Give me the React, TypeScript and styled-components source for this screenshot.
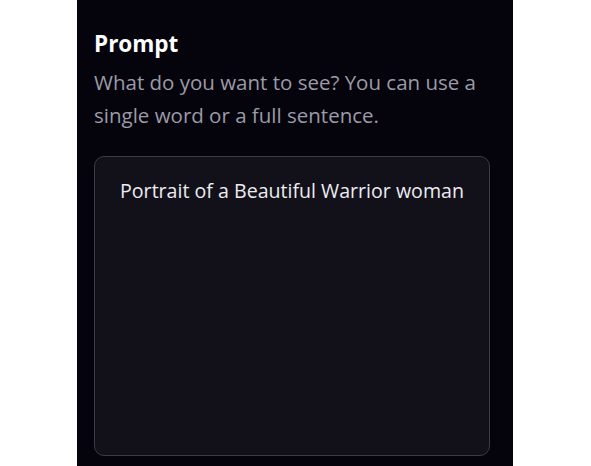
import styled, { createGlobalStyle } from "styled-components";

const GlobalStyle = createGlobalStyle`
  html, body {
    margin: 0;
    padding: 0;
    background: #ffffff;
  }
  * {
    box-sizing: border-box;
  }
`;

export default function App() {
  return (
    <>
      <GlobalStyle />
      <Page>
        <Panel>
          <Title>Prompt</Title>
          <Description>
            What do you want to see? You can use a single word or a full
            sentence.
          </Description>
          <PromptInput
            defaultValue="Portrait of a Beautiful Warrior woman"
            spellCheck={false}
          />
        </Panel>
      </Page>
    </>
  );
}

const Page = styled.div`
  width: 591px;
  height: 466px;
  display: flex;
  overflow: hidden;
  padding-left: 77px;
`;

const Panel = styled.div`
  width: 436px;
  height: 466px;
  background-color: #05040d;
  padding: 30px 24px 0 17px;
  display: flex;
  flex-direction: column;
  font-family: "Open Sans", "Noto Sans", sans-serif;
`;

const Title = styled.h2`
  margin: 0;
  font-size: 22.5px;
  font-weight: 700;
  line-height: 28px;
  color: #ffffff;
`;

const Description = styled.p`
  margin: 8px 0 0;
  font-size: 20.5px;
  line-height: 33px;
  color: #9c9ba6;
`;

const PromptInput = styled.textarea`
  margin-top: 24px;
  width: 396px;
  height: 300px;
  resize: none;
  background-color: #121119;
  border: 1px solid #3b3a45;
  border-radius: 10px;
  padding: 20px 20px;
  color: #ececf1;
  font-family: inherit;
  font-size: 19.6px;
  line-height: 28px;
  text-align: center;
  outline: none;
`;
